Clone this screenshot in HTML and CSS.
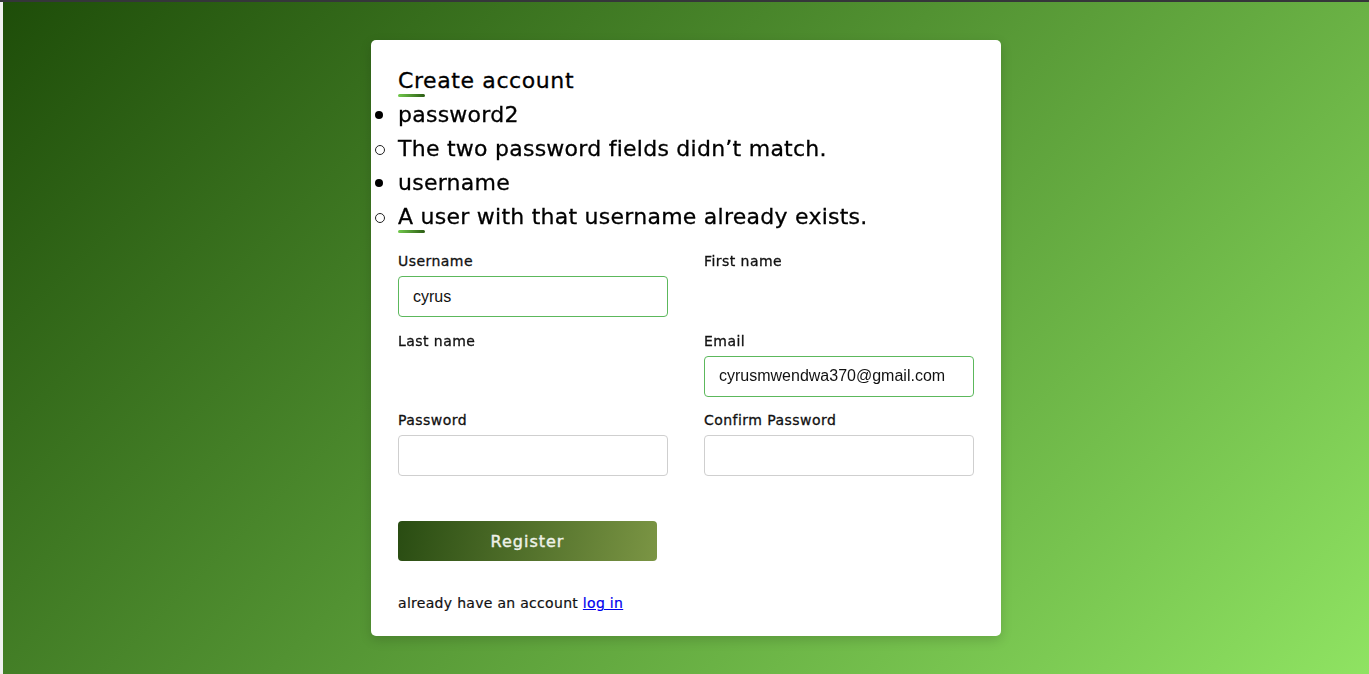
FILE: index.html
```html
<!DOCTYPE html>
<html lang="en">
<head>
<meta charset="utf-8">
<title>Create account</title>
<link rel="stylesheet" href="styles.css">
</head>
<body>
<div class="page">
  <div class="card">
    <div class="title">Create account</div>
    <ul class="errorlist">
      <li>password2
        <ul class="sub"><li>The two password fields didn’t match.</li></ul>
      </li>
      <li>username
        <ul class="sub"><li>A user with that username already exists.</li></ul>
      </li>
    </ul>
    <form class="form">
      <div class="grid">
        <div class="field">
          <label class="label">Username</label>
          <input class="input valid" type="text" value="cyrus" autofocus>
        </div>
        <div class="field">
          <label class="label">First name</label>
        </div>
        <div class="field">
          <label class="label">Last name</label>
        </div>
        <div class="field">
          <label class="label">Email</label>
          <input class="input valid" type="text" value="cyrusmwendwa370@gmail.com">
        </div>
        <div class="field">
          <label class="label">Password</label>
          <input class="input" type="password">
        </div>
        <div class="field">
          <label class="label">Confirm Password</label>
          <input class="input" type="password">
        </div>
      </div>
      <button class="btn" type="button">Register</button>
      <p class="footer">already have an account <a href="#">log in</a></p>
    </form>
  </div>
</div>
</body>
</html>
```
FILE: styles.css
```css
* { box-sizing: border-box; }
html, body { margin: 0; padding: 0; }
body {
  font-family: "DejaVu Sans", sans-serif;
  background: #35363a;
}
.page {
  margin-top: 2px;
  border-left: 3px solid #f0f0f0;
  min-height: 672px;
  display: flex;
  align-items: center;
  justify-content: center;
  background: linear-gradient(135deg, #1e4d09 0%, #8fe362 100%);
}
.card {
  width: 630px;
  background: #fff;
  border-radius: 5px;
  padding: 24px 27px 23px;
  box-shadow: 0 4px 12px rgba(0, 0, 0, 0.15);
}
.title {
  position: relative;
  font-size: 22px;
  line-height: 34px;
  letter-spacing: 0.6px;
  color: #000;
  -webkit-text-stroke: 0.3px #000;
}
.title::after,
.errorlist::after {
  content: "";
  position: absolute;
  left: 0;
  bottom: 1px;
  width: 27px;
  height: 3px;
  border-radius: 2px;
  background: linear-gradient(to right, #72c94c, #2b5c13);
}
.errorlist {
  position: relative;
  margin: 0;
  padding: 0;
  list-style: none;
  font-size: 22px;
  line-height: 34px;
  letter-spacing: 0.25px;
  color: #000;
  -webkit-text-stroke: 0.3px #000;
}
.errorlist li { position: relative; }
.errorlist li::before {
  content: "";
  position: absolute;
  left: -23px;
  top: 13px;
  width: 8px;
  height: 8px;
  border-radius: 50%;
  background: #000;
}
.errorlist .sub {
  margin: 0;
  padding: 0;
  list-style: none;
}
.errorlist .sub li::before {
  background: transparent;
  border: 1.2px solid #222;
}
.form { margin-top: 16px; }
.grid {
  display: grid;
  grid-template-columns: 270px 270px;
  column-gap: 36px;
  row-gap: 12.5px;
}
.field {
  display: flex;
  flex-direction: column;
  gap: 4px;
}
.label {
  font-size: 14px;
  line-height: 22px;
  letter-spacing: 0.45px;
  color: #111;
  -webkit-text-stroke: 0.3px #111;
}
.input {
  width: 270px;
  height: 41px;
  border: 1px solid #cfcfcf;
  border-radius: 4px;
  padding: 0 14px;
  font-family: "Liberation Sans", Arial, sans-serif;
  font-size: 16px;
  color: #111;
  outline: none;
}
.input.valid { border-color: #5cb85c; }
.btn {
  display: block;
  margin-top: 45px;
  width: 259px;
  height: 40px;
  border: none;
  border-radius: 4px;
  background: linear-gradient(100deg, #294c12 0%, #7b9544 100%);
  color: #eef2e8;
  font-family: "DejaVu Sans", sans-serif;
  font-size: 16px;
  letter-spacing: 1px;
  -webkit-text-stroke: 0.4px #eef2e8;
  cursor: pointer;
}
.footer {
  margin: 32px 0 0;
  font-size: 14px;
  line-height: 20px;
  letter-spacing: 0.3px;
  color: #111;
  -webkit-text-stroke: 0.2px #111;
}
.footer a { color: #0000ee; -webkit-text-stroke: 0.2px #0000ee; }
```
